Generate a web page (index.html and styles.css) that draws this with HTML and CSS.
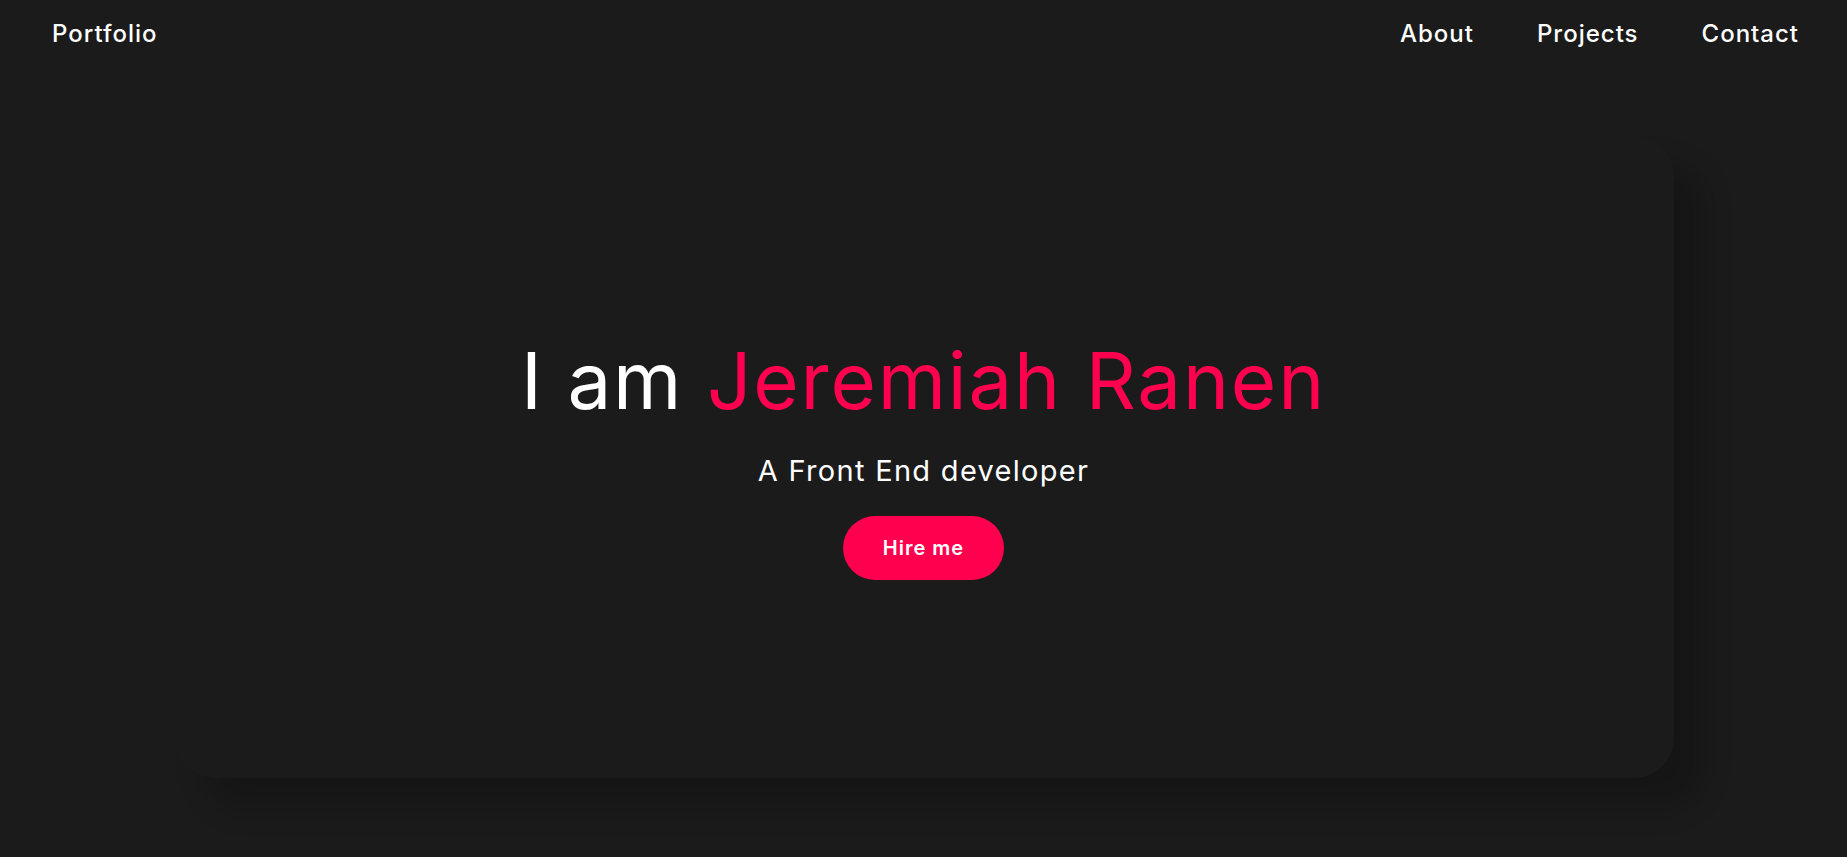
FILE: index.html
```html
<!DOCTYPE html>
<html lang="en">
<head>
<meta charset="utf-8">
<title>Portfolio</title>
<link rel="stylesheet" href="styles.css">
</head>
<body>
  <header class="navbar">
    <a class="brand" href="#">Portfolio</a>
    <nav class="nav-links">
      <a href="#">About</a>
      <a href="#">Projects</a>
      <a href="#">Contact</a>
    </nav>
  </header>
  <main class="hero-wrap">
    <section class="hero-card">
      <h1 class="hero-title">I am <span class="accent">Jeremiah Ranen</span></h1>
      <p class="hero-sub">A Front End developer</p>
      <a class="hire-btn" href="#">Hire me</a>
    </section>
  </main>
</body>
</html>
```
FILE: styles.css
```css
* { box-sizing: border-box; }
html, body { margin: 0; padding: 0; }
body {
  background: #1b1b1b;
  color: #fff;
  font-family: "Inter", "DejaVu Sans", sans-serif;
  height: 857px;
  overflow: hidden;
}
a { color: inherit; text-decoration: none; }

.navbar {
  height: 66px;
  display: flex;
  align-items: center;
  justify-content: space-between;
  padding: 0 48px 0 52px;
}
.brand, .nav-links a {
  font-size: 24px;
  font-weight: 500;
  letter-spacing: 1px;
}
.nav-links {
  display: flex;
  gap: 63px;
}

.hero-wrap {
  display: flex;
  justify-content: center;
  padding-top: 69px;
}
.hero-card {
  width: 1500px;
  height: 643px;
  padding-top: 5px;
  border-radius: 40px;
  background: #1b1b1b;
  box-shadow: 30px 30px 30px rgba(0, 0, 0, 0.2);
  display: flex;
  flex-direction: column;
  align-items: center;
  justify-content: center;
}
.hero-title {
  margin: 0;
  font-size: 78px;
  font-weight: 400;
  line-height: 1.1;
  letter-spacing: 1.8px;
}
.accent { color: #ff004f; }
.hero-sub {
  margin: 30px 0 28px;
  font-size: 29px;
  font-weight: 400;
  letter-spacing: 1.3px;
}
.hire-btn {
  display: inline-flex;
  align-items: center;
  justify-content: center;
  width: 161px;
  height: 64px;
  border-radius: 32px;
  background: #ff004f;
  font-size: 20px;
  font-weight: 600;
  letter-spacing: 1px;
}
```
